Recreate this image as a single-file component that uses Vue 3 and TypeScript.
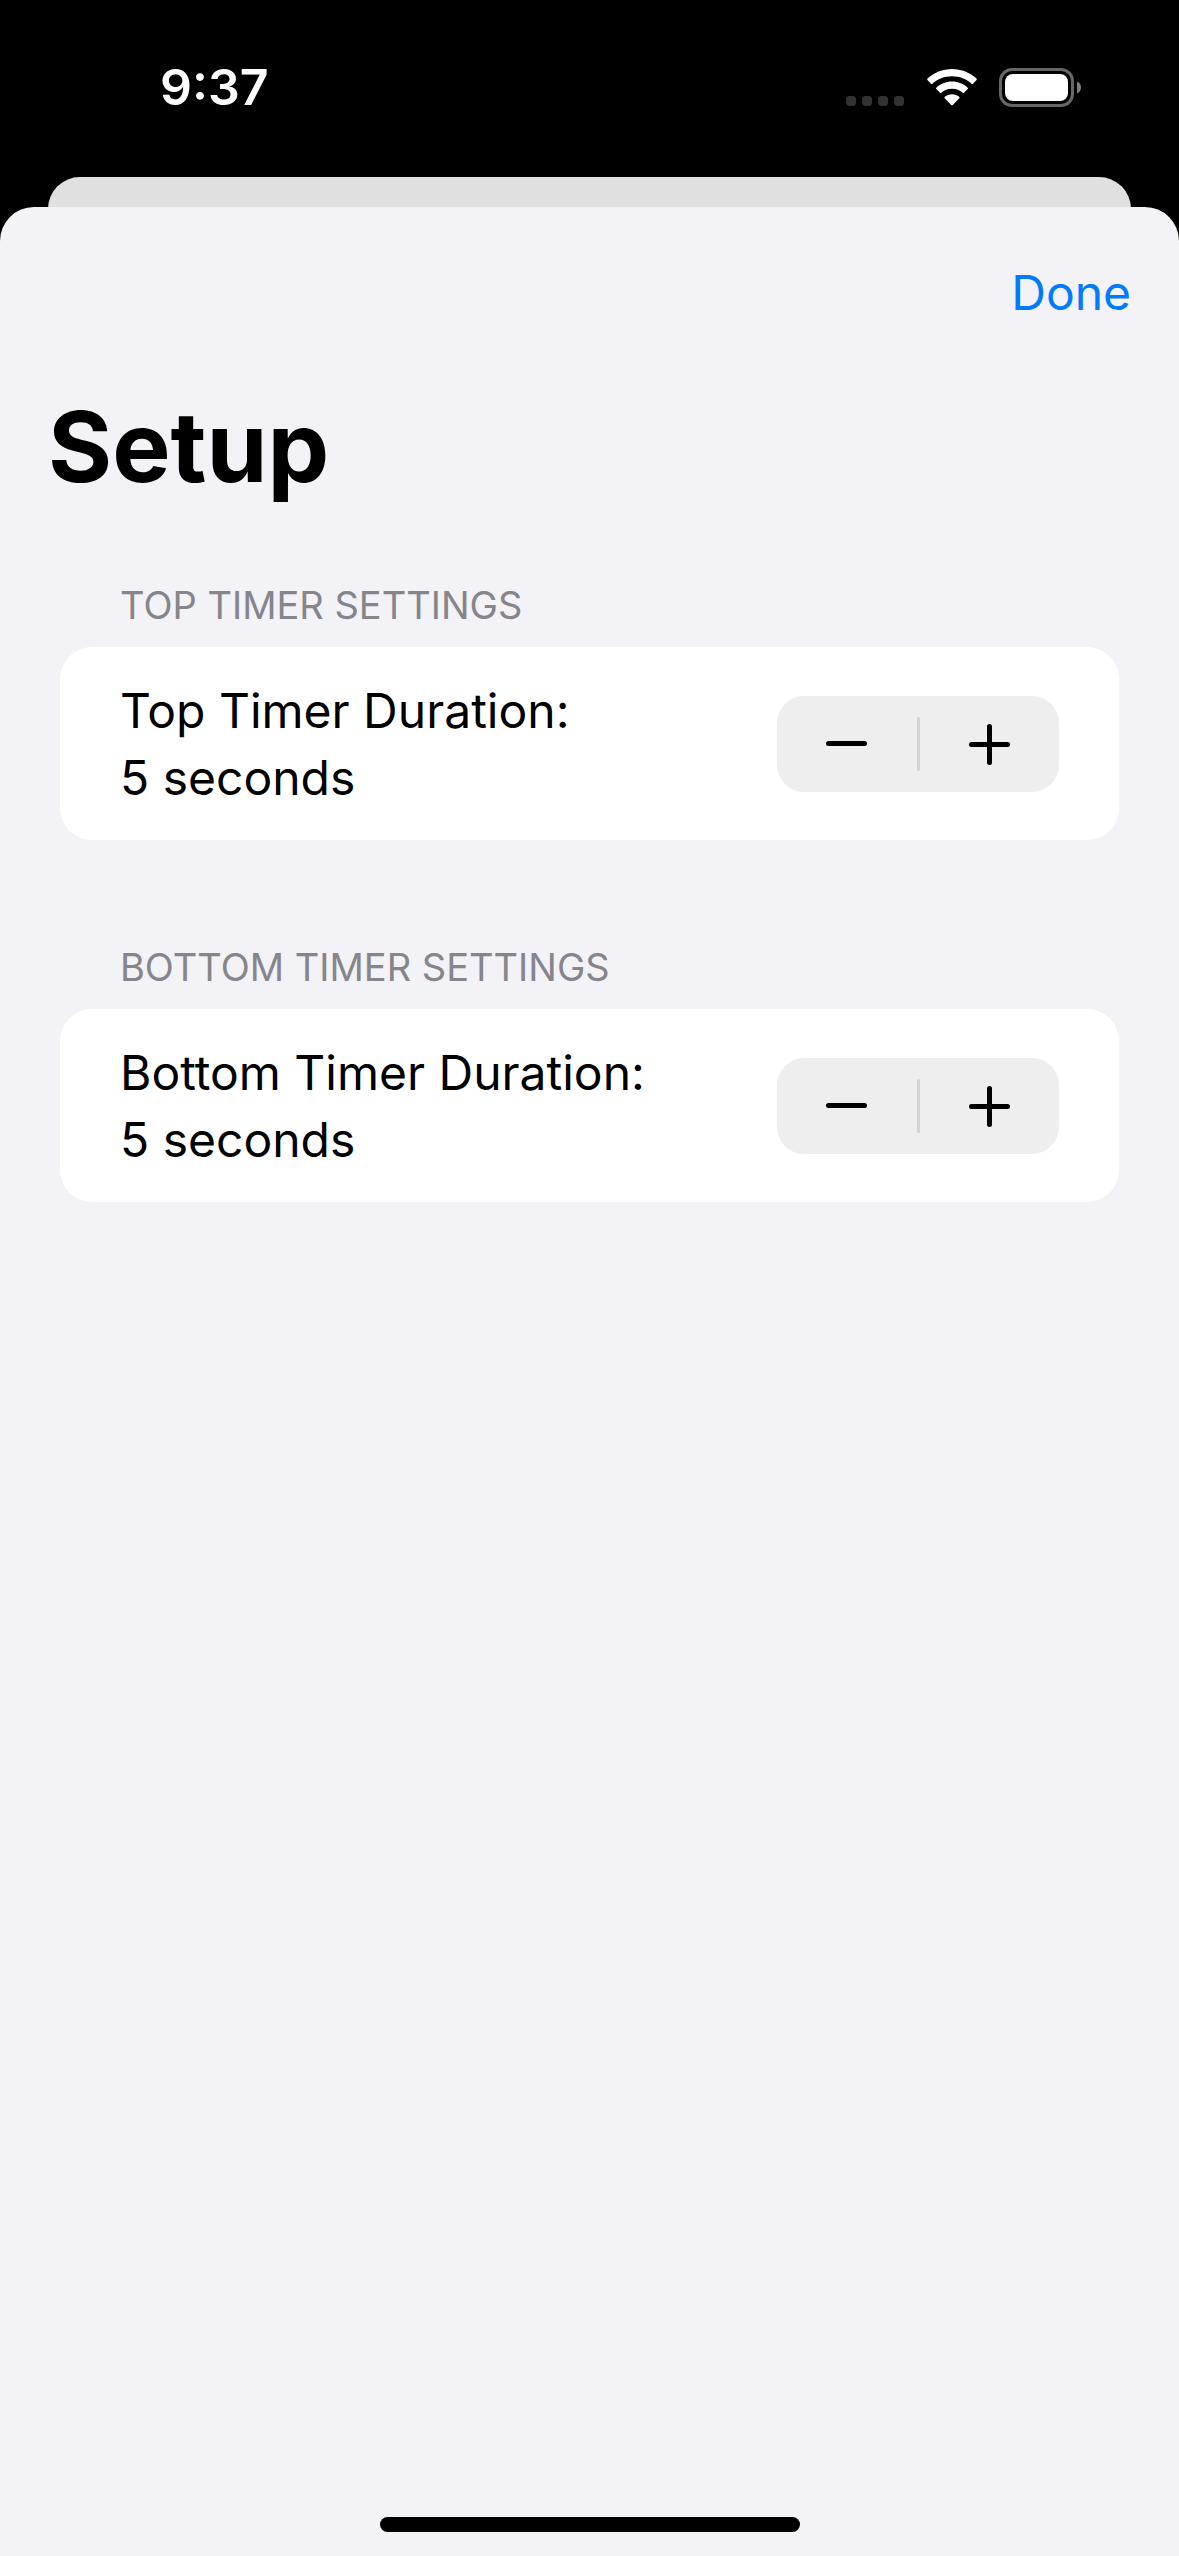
<script setup lang="ts">
import { reactive } from 'vue'

interface TimerSetting {
  id: string
  heading: string
  label: string
  seconds: number
}

const timers = reactive<TimerSetting[]>([
  { id: 'top', heading: 'Top Timer Settings', label: 'Top Timer Duration:', seconds: 5 },
  { id: 'bottom', heading: 'Bottom Timer Settings', label: 'Bottom Timer Duration:', seconds: 5 },
])

function step(timer: TimerSetting, delta: number): void {
  timer.seconds = Math.max(1, timer.seconds + delta)
}
</script>

<template>
  <div class="screen">
    <header class="status">
      <time class="clock">9:37</time>
      <div class="indicators">
        <svg class="cellular" width="59" height="39" viewBox="0 0 59 39" aria-hidden="true">
          <rect v-for="n in 4" :key="n" :x="(n - 1) * 16" y="28" width="10" height="10" rx="4" fill="#333" />
        </svg>
        <svg class="wifi" width="50" height="39" viewBox="0 0 50 39" fill="#fff" aria-hidden="true">
          <path d="M25 1C15.600 1 7 4.600 .5 10.600Q-.2 11.300 .5 12L4 15.700Q4.700 16.400 5.400 15.700C10.600 11 17.400 8.300 25 8.300S39.400 11 44.600 15.700Q45.300 16.400 46 15.700L49.500 12Q50.200 11.300 49.500 10.600C43 4.600 34.400 1 25 1Z" />
          <path d="M25 13.600C19 13.600 13.500 15.900 9.300 19.700Q8.600 20.400 9.300 21.100L12.900 24.700Q13.600 25.400 14.300 24.700C17.100 22.200 20.900 20.700 25 20.700S32.900 22.200 35.700 24.700Q36.400 25.400 37.100 24.700L40.700 21.100Q41.400 20.400 40.700 19.700C36.500 15.900 31 13.600 25 13.600Z" />
          <path d="M25 26.300C22.300 26.300 19.800 27.200 17.800 28.800Q17 29.500 17.700 30.200L24.200 37Q25 37.900 25.800 37L32.300 30.200Q33 29.500 32.200 28.800C30.200 27.200 27.700 26.300 25 26.300Z" />
        </svg>
        <svg class="battery" width="82" height="39" viewBox="0 0 82 39" aria-hidden="true">
          <rect x="1.500" y="1.500" width="72" height="36" rx="11.500" fill="none" stroke="#666" stroke-width="3" />
          <rect x="6" y="6" width="63" height="27" rx="8" fill="#fff" />
          <path d="M78 13.500C80.400 14.500 82 16.800 82 19.500S80.400 24.500 78 25.500Z" fill="#808080" />
        </svg>
      </div>
    </header>

    <div class="behind"></div>

    <main class="sheet">
      <nav class="bar">
        <button type="button" class="done">Done</button>
      </nav>
      <h1 class="title">Setup</h1>

      <section v-for="timer in timers" :key="timer.id" class="group">
        <h2 class="heading">{{ timer.heading }}</h2>
        <div class="card">
          <div class="text">
            <span :id="`${timer.id}-label`">{{ timer.label }}</span>
            <output :aria-labelledby="`${timer.id}-label`">{{ timer.seconds }} seconds</output>
          </div>
          <div class="stepper" role="group" :aria-labelledby="`${timer.id}-label`">
            <button type="button" aria-label="Decrement" @click="step(timer, -1)">
              <svg width="42" height="42" viewBox="0 0 42 42" aria-hidden="true">
                <path d="M2.500 20.500H38.500" />
              </svg>
            </button>
            <span class="divider"></span>
            <button type="button" aria-label="Increment" @click="step(timer, 1)">
              <svg width="42" height="42" viewBox="0 0 42 42" aria-hidden="true">
                <path d="M3.500 21.500H39.500M21.500 3.500V39.500" />
              </svg>
            </button>
          </div>
        </div>
      </section>

      <div class="home"></div>
    </main>
  </div>
</template>

<style>
body {
  margin: 0;
  background: #000;
}
</style>

<style scoped>
.screen {
  display: flex;
  flex-direction: column;
  min-height: 100vh;
  background: #000;
  color: #000;
  font-family: Inter, Roboto, sans-serif;
  font-size: 48px;
  line-height: 67px;
}

.status {
  display: flex;
  align-items: center;
  justify-content: space-between;
  box-sizing: border-box;
  height: 177px;
  padding: 0 98px 2px 160px;
  color: #fff;
}

.clock {
  font-size: 50px;
  font-weight: 600;
}

.indicators {
  display: flex;
  align-items: center;
  gap: 22px;
}

.behind {
  height: 60px;
  margin: 0 48px -30px;
  border-radius: 32px 32px 0 0;
  background: #e0e0e0;
}

.sheet {
  display: flex;
  flex: 1;
  flex-direction: column;
  position: relative;
  padding: 52px 0 24px;
  border-radius: 34px 34px 0 0;
  background: #f2f2f7;
}

.bar {
  display: flex;
  justify-content: flex-end;
  padding: 0 48px;
}

button {
  margin: 0;
  padding: 0;
  border: 0;
  background: none;
  color: inherit;
  font: inherit;
  cursor: pointer;
}

.done {
  color: #007aff;
}

.title {
  margin: 61px 48px 1px;
  font-size: 98px;
  font-weight: 700;
  line-height: 120px;
}

.group {
  margin: 73px 60px 30px;
}

.heading {
  margin: 0 60px 18px;
  color: #85858b;
  font-size: 38px;
  font-weight: 400;
  line-height: 48px;
  text-transform: uppercase;
}

.card {
  display: flex;
  align-items: center;
  justify-content: space-between;
  box-sizing: border-box;
  min-height: 193px;
  padding: 24px 60px;
  border-radius: 32px;
  background: #fff;
}

.text {
  display: flex;
  flex-direction: column;
}

.stepper {
  display: flex;
  align-items: center;
  width: 282px;
  height: 96px;
  border-radius: 27px;
  background: #eee;
}

.stepper button {
  display: flex;
  flex: 1;
  align-items: center;
  justify-content: center;
  height: 100%;
}

.stepper path {
  fill: none;
  stroke: #000;
  stroke-width: 5;
  stroke-linecap: round;
}

.divider {
  width: 3px;
  height: 54px;
  border-radius: 2px;
  background: #d3d3d5;
}

.home {
  align-self: center;
  width: 420px;
  height: 15px;
  margin-top: auto;
  border-radius: 8px;
  background: #000;
}
</style>
